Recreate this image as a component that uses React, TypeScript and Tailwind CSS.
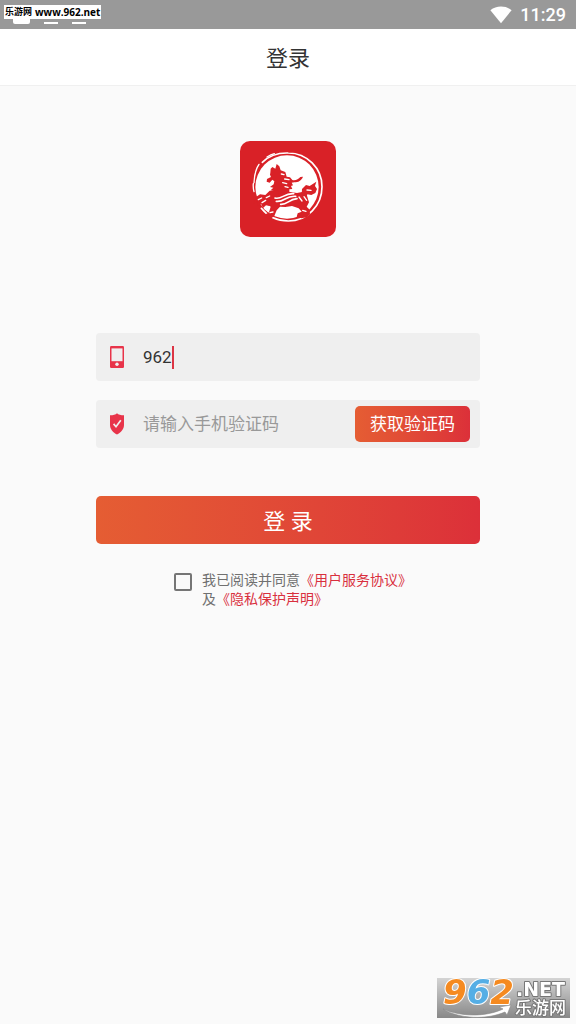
import { type FormEvent, useState } from "react";

function WifiIcon() {
  return (
    <svg viewBox="0 0 22 18" className="h-[18px] w-[22px]" fill="#fff" aria-hidden="true">
      <path d="M11 17.2 0.4 4.2C3.4 1.8 7 .6 11 .6s7.600 1.200 10.600 3.600z" />
    </svg>
  );
}

function PhoneIcon() {
  return (
    <svg viewBox="0 0 14 22" className="h-[22px] w-[14px]" aria-hidden="true">
      <rect width="14" height="22" rx="1.200" fill="#e8344a" />
      <rect x="1.500" y="2.400" width="11" height="12.800" fill="#efefef" />
      <circle cx="7" cy="18.300" r="1.700" fill="#efefef" />
    </svg>
  );
}

function ShieldIcon() {
  return (
    <svg viewBox="0 0 14 22" className="h-[22px] w-[14px]" aria-hidden="true">
      <path d="M7 .2C8.400 1.500 10.800 2.300 14 2.300V12c0 4.400-3 7.300-7 9.600C3 19.300 0 16.400 0 12V2.300C3.200 2.300 5.600 1.500 7 .2z" fill="#e8344a" />
      <path d="M3.600 10.900 6 13.700 10.800 7.300" fill="none" stroke="#efefef" strokeWidth="1.700" />
    </svg>
  );
}

function BrandLogo() {
  return (
    <svg viewBox="15 18 288 288" className="size-24" role="img" aria-label="logo">
      <rect x="15" y="18" width="288" height="288" rx="30" fill="#d92127" />
      <circle cx="156" cy="156" r="95" fill="#fff" />
      <g fill="none" stroke="#fff" strokeLinecap="round">
        <path d="M82 82C102 62 130 53 160 54c56 0 101 46 101 101 0 56-44 103-101 103-34 0-62-14-81-38" strokeWidth="5" />
        <path d="M72 88c-9 13-14 33-15 55M57 170c-2-8-3-16-2-24M96 66c8-5 14-8 22-10" strokeWidth="4" />
      </g>
      <g fill="#d92127">
        {/* head and neck */}
        <path d="M106 113 107 101l5-5 9 5 4-14 8 7 4 12 14 5 4 14 10 2 7 8c10 2 18-2 24-9l8-1c-5 12-14 17-26 17l-8 1 4 8-6 2 4 9-9 1 0 10 3 13-34 14-18-12-4-13 7-7-10-2 8-8-10-2 11-8 2-9-6-5-8 9-9-3 1-8 12-6-3-7z" />
        {/* body and hind leg */}
        <path d="M114 168l22-10 24 12 26 4 19-4 11 12 6 20-7 13 9 9 1 14-10 9-16 3-14-5 3-10 12-5-9-10-20-7-20 3-16-1-10 11-7 17-11 8-13-3-2-10 10-6 5-17-12-9z" />
        {/* front leg and claws */}
        <path d="M130 165l-26 2-13 13-16-2-13 9-6 18 11-5 2 12 9-6 6 13 9-8 10 2 8-10-8-7 8-8 20 3z" />
        {/* tail */}
        <path d="M200 180l1-18 12-12 11 3 20-13-4 13 6 9-5 12-12 6-12-2-4 14z" />
      </g>
      <g fill="none" stroke="#fff" strokeLinecap="round" strokeLinejoin="round">
        <path d="M120 189c20 6 27-15 56-13M124 199c24 3 29-18 58-15M137 208c22 1 23-15 49-17" strokeWidth="5" />
        <path d="M139 117l8 2M149 132l13 2M143 143l12 3M150 155l9 2M192 186l9 12M207 185l8 11" strokeWidth="4" />
        <path d="M70 194l10-5M81 203l11-7M104 183l-10 5M216 165l12 1M203 226l10 3M105 233l9-2" strokeWidth="4" />
      </g>
    </svg>
  );
}

function SiteBadge() {
  return (
    <svg
      viewBox="0 -10 133 60"
      className="pointer-events-none fixed right-1.5 -bottom-1 h-[60px] w-[133px]"
      role="img"
      aria-label="962.NET 乐游网"
    >
      <defs>
        <linearGradient id="badge-bg" x1="0" y1="0" x2="0" y2="1">
          <stop offset="0" stopColor="#d4d4d4" />
          <stop offset="1" stopColor="#888" />
        </linearGradient>
      </defs>
      <rect width="133" height="40" fill="url(#badge-bg)" />
      <path d="M6 31c18 8 43 8 60 0l-4-2 12-2-4 10-2-3C50 42 22 41 6 31z" fill="#fff" stroke="#888" strokeWidth=".6" />
      <g
        fontFamily="'DejaVu Sans', sans-serif"
        fontWeight="700"
        stroke="#fff"
        strokeLinejoin="round"
        paintOrder="stroke"
      >
        <text x="6" y="26" fontSize="34" fontStyle="italic" strokeWidth="2">
          <tspan fill="#f58a20">9</tspan>
          <tspan fill="#55aee5">6</tspan>
          <tspan fill="#f58a20">2</tspan>
        </text>
        <g fill="#fff" stroke="#777" strokeWidth="2">
          <text x="79" y="18" fontSize="19">.NET</text>
          <text x="78" y="36" fontSize="17" fontWeight="500" fontFamily="'Noto Sans CJK SC', sans-serif">乐游网</text>
        </g>
      </g>
    </svg>
  );
}

function StatusBar() {
  return (
    <div className="relative flex h-[29px] items-center justify-end gap-2 bg-[#999] pr-2.5">
      <div className="absolute top-[18px] left-[13px] flex items-end gap-3.5">
        <span className="h-1.5 w-[17px] rounded-b-xs bg-white" />
        <span className="h-0.5 w-3.5 bg-white" />
        <span className="h-0.5 w-3.5 bg-white" />
      </div>
      <span className="absolute top-[5px] left-1 flex h-3.5 items-center gap-[3px] bg-white px-px text-[9px] font-bold whitespace-nowrap text-black">
        <span className="font-['Noto_Sans_CJK_SC',sans-serif]">乐游网</span>
        <span className="font-['Open_Sans',sans-serif] text-[10px]">www.962.net</span>
      </span>
      <WifiIcon />
      <span className="pt-px font-[Roboto,sans-serif] text-[18px] leading-7 font-medium text-white">11:29</span>
    </div>
  );
}

export default function App() {
  const [phone, setPhone] = useState("962");
  const [code, setCode] = useState("");
  const [agreed, setAgreed] = useState(false);

  function onSubmit(event: FormEvent) {
    event.preventDefault();
  }

  return (
    <div lang="zh-CN" className="min-h-screen bg-[#fafafa] font-[Roboto,'Noto_Sans_CJK_SC',sans-serif] text-[#333]">
      <StatusBar />
      <header className="flex h-[57px] items-center justify-center border-b border-[#f0f0f0] bg-white pt-0.5">
        <h1 className="text-[22px]">登录</h1>
      </header>

      <main className="mx-auto flex w-2/3 flex-col pt-[55px]">
        <div className="flex justify-center">
          <BrandLogo />
        </div>

        <form onSubmit={onSubmit} className="mt-24 flex flex-col">
          <label className="flex h-12 items-center rounded-sm bg-[#efefef] px-3.5">
            <PhoneIcon />
            <input
              type="tel"
              aria-label="手机号"
              value={phone}
              onChange={(event) => setPhone(event.target.value)}
              className="ml-[19px] pt-0.5 text-[17px] caret-transparent outline-none [field-sizing:content]"
            />
            <span className="h-[23px] w-0.5 bg-[#dc3545]" />
          </label>

          <div className="mt-[19px] flex h-12 items-center rounded-sm bg-[#efefef] pr-2.5 pl-3.5">
            <ShieldIcon />
            <input
              type="text"
              aria-label="验证码"
              placeholder="请输入手机验证码"
              value={code}
              onChange={(event) => setCode(event.target.value)}
              className="ml-[19px] min-w-0 flex-1 pt-0.5 text-[17px] outline-none placeholder:text-[#999]"
            />
            <button
              type="button"
              className="h-9 shrink-0 rounded-[5px] bg-linear-to-r from-[#e55d33] to-[#dc3039] px-[15px] pt-0.5 text-[17px] text-white"
            >
              获取验证码
            </button>
          </div>

          <button
            type="submit"
            className="mt-12 h-12 rounded-[5px] bg-linear-to-r from-[#e55d33] to-[#dc3039] pt-0.5 text-[22px] text-white"
          >
            登 录
          </button>

          <div className="mt-[27px] flex items-start gap-2.5 pl-[78px]">
            <input
              id="agree"
              type="checkbox"
              checked={agreed}
              onChange={(event) => setAgreed(event.target.checked)}
              className="mt-0.5 size-[18px] shrink-0 appearance-none rounded-xs border-2 border-[#757575] checked:bg-[#dc3039]"
            />
            <p className="text-sm leading-[19px] text-[#707070]">
              <label htmlFor="agree">我已阅读并同意</label>
              <a href="#terms" className="text-[#d9303e]">《用户服务协议》</a>
              <br />
              及<a href="#privacy" className="text-[#d9303e]">《隐私保护声明》</a>
            </p>
          </div>
        </form>
      </main>

      <SiteBadge />
    </div>
  );
}
